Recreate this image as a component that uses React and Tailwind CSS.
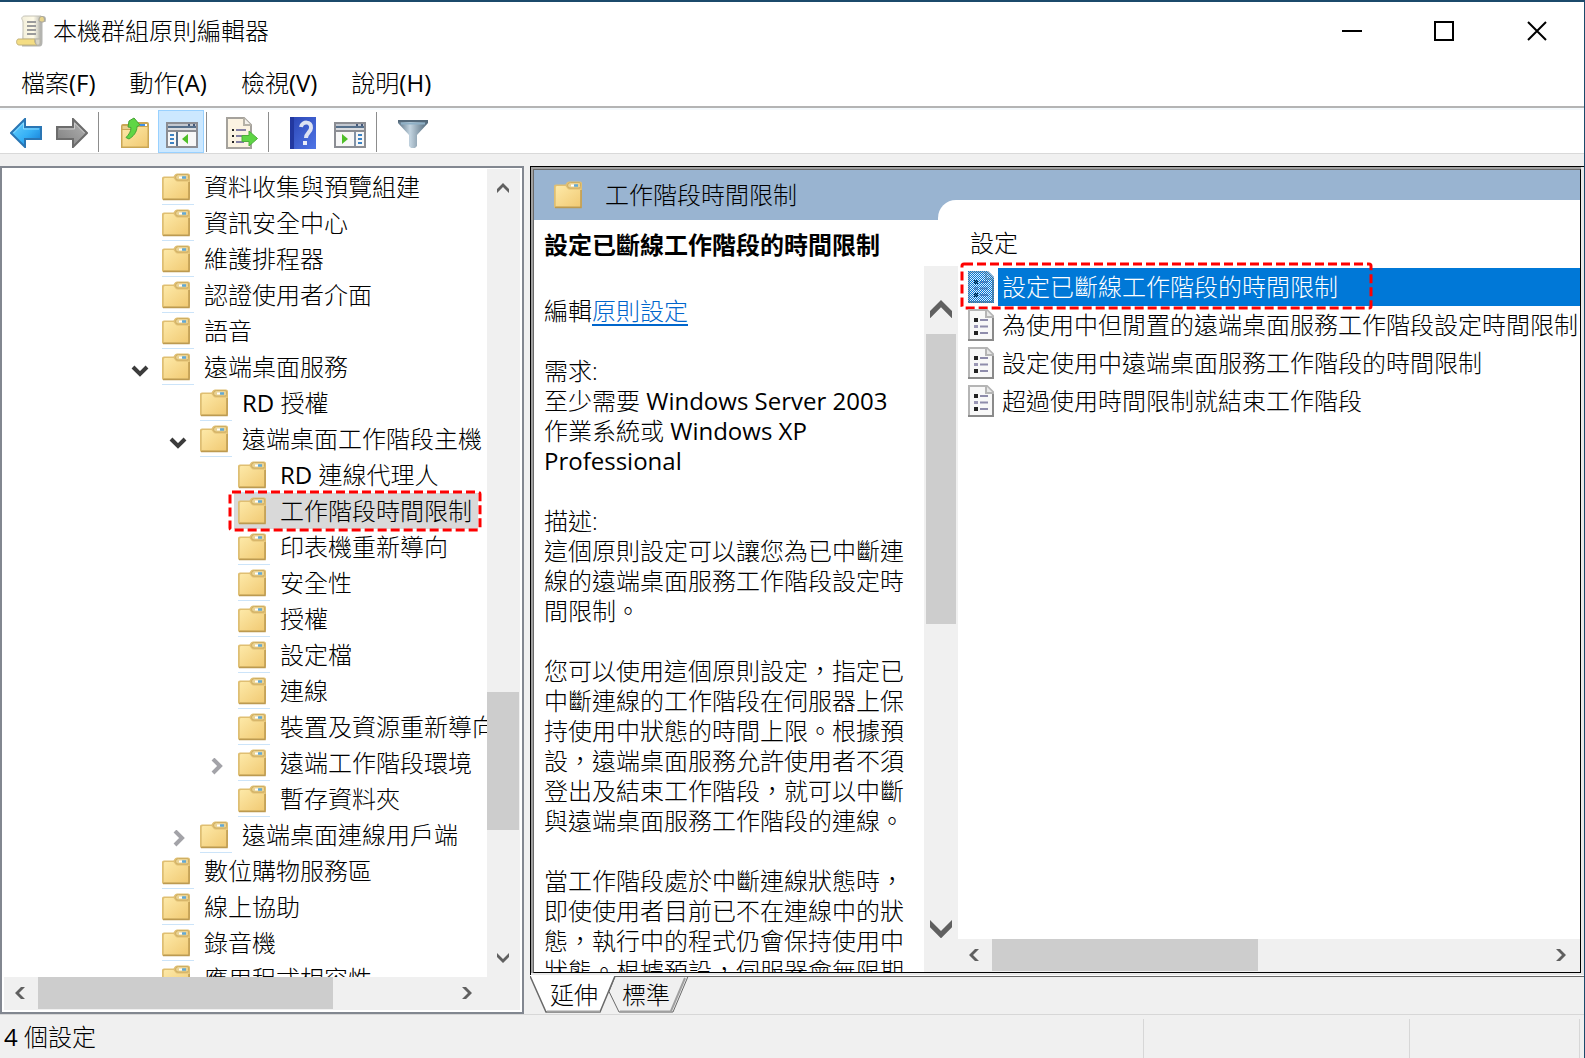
import { useState } from 'react';

const treeData = [
  { label: '資料收集與預覽組建', level: 0 },
  { label: '資訊安全中心', level: 0 },
  { label: '維護排程器', level: 0 },
  { label: '認證使用者介面', level: 0 },
  { label: '語音', level: 0 },
  { label: '遠端桌面服務', level: 0, state: 'open' },
  { label: '授權', prefix: 'RD', level: 1 },
  { label: '遠端桌面工作階段主機', level: 1, state: 'open' },
  { label: '連線代理人', prefix: 'RD', level: 2 },
  { label: '工作階段時間限制', level: 2 },
  { label: '印表機重新導向', level: 2 },
  { label: '安全性', level: 2 },
  { label: '授權', level: 2 },
  { label: '設定檔', level: 2 },
  { label: '連線', level: 2 },
  { label: '裝置及資源重新導向', level: 2 },
  { label: '遠端工作階段環境', level: 2, state: 'closed' },
  { label: '暫存資料夾', level: 2 },
  { label: '遠端桌面連線用戶端', level: 1, state: 'closed' },
  { label: '數位購物服務區', level: 0 },
  { label: '線上協助', level: 0 },
  { label: '錄音機', level: 0 },
  { label: '應用程式相容性', level: 0 },
];

const settings = [
  '設定已斷線工作階段的時間限制',
  '為使用中但閒置的遠端桌面服務工作階段設定時間限制',
  '設定使用中遠端桌面服務工作階段的時間限制',
  '超過使用時間限制就結束工作階段',
];

const menus = [
  { name: '檔案', hotkey: '(F)' },
  { name: '動作', hotkey: '(A)' },
  { name: '檢視', hotkey: '(V)' },
  { name: '說明', hotkey: '(H)' },
];

const indents = ['pl-[127px]', 'pl-[165px]', 'pl-[203px]'];

function Defs() {
  return (
    <svg className="absolute w-0 h-0" aria-hidden="true">
      <defs>
        <linearGradient id="folder" x1="0" y1="0" x2="1" y2="1">
          <stop offset="0" stopColor="#fde9a8" />
          <stop offset="1" stopColor="#f1ca74" />
        </linearGradient>
        <linearGradient id="blueArrow" x1="0" y1="0" x2="1" y2="1">
          <stop offset="0" stopColor="#6fd6ff" />
          <stop offset="0.55" stopColor="#36b0f5" />
          <stop offset="1" stopColor="#0f74cf" />
        </linearGradient>
        <linearGradient id="grayArrow" x1="0" y1="0" x2="1" y2="1">
          <stop offset="0" stopColor="#b4b4b4" />
          <stop offset="1" stopColor="#7e7e7e" />
        </linearGradient>
        <linearGradient id="help" x1="0" y1="0" x2="1" y2="1">
          <stop offset="0" stopColor="#2a45b4" />
          <stop offset="1" stopColor="#4f75e6" />
        </linearGradient>
        <linearGradient id="funnel" x1="0" y1="0" x2="1" y2="0">
          <stop offset="0" stopColor="#5b7386" />
          <stop offset="0.4" stopColor="#c3d4e0" />
          <stop offset="1" stopColor="#4d6577" />
        </linearGradient>
        <linearGradient id="scroll" x1="0" y1="0" x2="1" y2="0">
          <stop offset="0" stopColor="#f2eeda" />
          <stop offset="0.6" stopColor="#fffbe8" />
          <stop offset="1" stopColor="#b9b9b4" />
        </linearGradient>
        <pattern id="dither" width="2" height="2" patternUnits="userSpaceOnUse">
          <rect width="1" height="1" fill="#0078d7" />
          <rect x="1" y="1" width="1" height="1" fill="#0078d7" />
        </pattern>
      </defs>
    </svg>
  );
}

function FolderIcon() {
  return (
    <svg width="28" height="28" viewBox="0 0 28 28" className="shrink-0">
      <path d="M0 5q0-1.500 2-1.500h9.500l1-1.500q0.800-1.500 2.500-1.500h11q2 0 2 2V25q0 2-2 2H2q-2 0-2-1.500z" fill="#e0bf72" />
      <path d="M1.500 6.500Q1.500 5 3 5h8.500l2 2.500q0.500 1 2 1H27V25H1.500z" fill="url(#folder)" />
      <path d="M13.500 4q1-2.500 3-2.500h8.500q1.500 0 1.500 1.500v2.500q0 1.500-1.500 1.500h-9q-2.500 0-2.500-3z" fill="#ead394" stroke="#cfae62" />
      <path d="M17 4.500h4" stroke="#fff" strokeWidth="2" />
      <path d="M20 4.500h4" stroke="#64a9d2" strokeWidth="2.500" />
      <path d="M27 9v17.500H1" fill="none" stroke="#bd9a50" strokeWidth="1.500" />
      <path d="M1 25V6" stroke="#dcbd74" />
    </svg>
  );
}

function GpoIcon() {
  return (
    <svg width="31" height="32" viewBox="0 0 31 32">
      <path d="M8 1h19c3 0 3.500 3 2.500 6h-3v20c0 3-1 4.500-3 4.500H6z" fill="#b4b4b0" />
      <path d="M6 2.500C7 1 8 1 10 1h15c-2 1-2 3-2 6v17H7V7C7 5 5 4 6 2.500z" fill="url(#scroll)" stroke="#c4c2b6" />
      <path d="M23 6c0-3 1-5 3.500-4.500S29 7 27 7h-2z" fill="#e8d48c" stroke="#a8a59a" />
      <path d="M2 24h17c-1 2 0 5 2 6H3c-3 0-3-5-1-6z" fill="#f4dd83" stroke="#c2b27a" />
      <path d="M19 24h5v4c0 2-3 3-4 1z" fill="#d8d5c8" stroke="#b5b2a6" />
      <path d="M11 7h9M11 11h9M11 15h9M11 19h9" stroke="#9b9b9b" strokeWidth="2" />
    </svg>
  );
}

function SettingIcon({ selected }) {
  return (
    <svg width="26" height="32" viewBox="0 0 26 32" className="shrink-0">
      <path d="M1 1h18l6 6v24H1z" fill={selected ? '#e3eef8' : '#f8f8f8'} stroke="#b5b5b5" strokeWidth="2" />
      <path d="M25 9v22H0" fill="none" stroke="#8a8a8a" strokeWidth="2" />
      <path d="M18 1v7h7" fill="#e8e8e8" stroke="#b5b5b5" strokeWidth="2" />
      <path d="M6 9h4v4H6zM6 22h4v4H6z" fill="#222" />
      <path d="M6 16h4v3H6z" fill="#9a97b4" />
      <path d="M12 11h8M12 17.500h8M12 24h8" stroke="#8e8cab" strokeWidth="2" />
      {selected && <path d="M0 0h20l6 6v26H0z" fill="url(#dither)" />}
    </svg>
  );
}

function ArrowIcon({ forward }) {
  return (
    <svg width="32" height="30" viewBox="0 0 32 30" className={forward ? '-scale-x-100' : ''}>
      <path
        d="M1 15L15 1v8h16v12H15v8z"
        fill={forward ? 'url(#grayArrow)' : 'url(#blueArrow)'}
        stroke={forward ? '#6c6c6c' : '#2a76b4'}
        strokeWidth="2"
      />
      <path d="M3.500 15L13.500 5v6H29" fill="none" stroke={forward ? '#cacaca' : '#8fdcff'} />
    </svg>
  );
}

function UpFolderIcon() {
  return (
    <svg width="30" height="32" viewBox="0 0 30 32">
      <path d="M1 9q0-2 2-2h11l2-2h11q2 0 2 2v24H1z" fill="#c9a655" />
      <path d="M2.500 13H14l3-3h10.500v19.500h-25z" fill="url(#folder)" />
      <path d="M2.500 9H14v3H2.500z" fill="#e9cf8b" />
      <path d="M18 7h9v2h-9z" fill="#fff" />
      <path d="M20 7h5v2h-5z" fill="#3f8fe6" />
      <path d="M9 4l5-3 6 7-3 1.500c0 6-4 10-8 12.500l-3-1.500c3-3 5-6 5-10L8 10z" fill="#5fd644" stroke="#45a234" />
    </svg>
  );
}

function ConsoleIcon({ flipped }) {
  return (
    <svg width="32" height="26" viewBox="0 0 32 26">
      <rect x="1" y="1" width="30" height="24" fill="#f7f7f7" stroke="#8b8d93" strokeWidth="2" />
      <path d="M2 3h28" stroke="#c3c8d0" strokeWidth="2" />
      <path d="M22 3h2M27 3h2" stroke="#45597a" strokeWidth="2" />
      <path d="M2 5h28" stroke="#56708c" strokeWidth="2" />
      <path d="M2 7h28" stroke="#dadcdf" strokeWidth="2" />
      <path d="M2 9h28" stroke="#8b8d93" strokeWidth="2" />
      {flipped ? (
        <g>
          <path d="M21 10v14" stroke="#8292a6" strokeWidth="2" />
          <path d="M8 12l6 5-6 5z" fill="#4fbf2a" />
          <path d="M24 13h4M24 17h4M24 21h4" stroke="#3b82c4" strokeWidth="2" />
        </g>
      ) : (
        <g>
          <path d="M11 10v14" stroke="#56708c" strokeWidth="2" />
          <path d="M22 12l-6 5 6 5z" fill="#4fbf2a" />
          <path d="M4 13h4M4 17h4M4 21h4" stroke="#3b82c4" strokeWidth="2" />
        </g>
      )}
    </svg>
  );
}

function ExportIcon() {
  return (
    <svg width="32" height="32" viewBox="0 0 32 32">
      <path d="M1 1h17l7 7v23H1z" fill="#fbf3e2" stroke="#a5a29c" strokeWidth="2" />
      <path d="M18 1v7h7" fill="#f4f1ec" stroke="#b5b1a6" strokeWidth="2" />
      <path d="M6 13h2M6 19h2M6 25h2" stroke="#222" strokeWidth="2" />
      <path d="M10 13h10M10 19h6M10 25h8" stroke="#8481a4" strokeWidth="2" />
      <path d="M16 18.500h7V14l8.500 7.500L23 29v-4.500h-7z" fill="#5ed545" stroke="#4cae3a" />
    </svg>
  );
}

function HelpIcon() {
  return (
    <svg width="26" height="32" viewBox="0 0 26 32">
      <rect width="26" height="32" fill="url(#help)" />
      <path d="M2 0v32" stroke="#2238a0" strokeWidth="4" />
      <path d="M11 10c1-6 11-6 10 1 0 4-5 5-5 10" fill="none" stroke="#dde2f2" strokeWidth="4" />
      <rect x="13" y="24" width="4" height="4" fill="#e9edf8" />
    </svg>
  );
}

function FunnelIcon() {
  return (
    <svg width="30" height="28" viewBox="0 0 30 28">
      <path d="M0 0h30v3L19 15v11l-2 2h-4l-2-2V15L0 3z" fill="url(#funnel)" />
      <path d="M0 1h30" stroke="#54697a" strokeWidth="2" />
      <path d="M3 3.500h24" stroke="#8fb0c6" strokeWidth="2" />
    </svg>
  );
}

const arrowPoints = {
  up: '0,6 6,0 12,6 12,10 6,4 0,10',
  down: '0,0 6,6 12,0 12,4 6,10 0,4',
  left: '6,0 0,6 6,12 10,12 4,6 10,0',
  right: '4,0 10,6 4,12 0,12 6,6 0,0',
};

function ScrollArrow({ dir, label, className, size = 'w-3' }) {
  const vertical = dir === 'up' || dir === 'down';
  return (
    <button aria-label={label} className={`flex shrink-0 items-center justify-center ${className}`}>
      <svg viewBox={vertical ? '0 0 12 10' : '0 0 10 12'} className={size}>
        <polygon points={arrowPoints[dir]} fill="#606060" />
      </svg>
    </button>
  );
}

// Latin runs are a bit heavier than the Chinese text around them
function Latin({ children }) {
  return <span className="font-normal">{children}</span>;
}

// red dashed marker around a highlighted entry
function Marker({ className }) {
  return (
    <svg className={`absolute pointer-events-none overflow-visible ${className}`}>
      <rect width="100%" height="100%" rx="2" fill="none" stroke="#fe0000" strokeWidth="3" strokeDasharray="9 4" />
    </svg>
  );
}

function TreeRow({ item, selected, onSelect }) {
  return (
    <li className={`flex h-9 items-center ${indents[item.level]}`}>
      <span className="flex w-[27px] shrink-0 pt-2">
        {item.state === 'open' && (
          <svg width="18" height="12" viewBox="0 0 18 12">
            <path d="M2 2l7 7 7-7" fill="none" stroke="#3c3c3c" strokeWidth="4" />
          </svg>
        )}
        {item.state === 'closed' && (
          <svg width="18" height="18" viewBox="0 0 18 18">
            <path d="M6 1l7 7-7 7" fill="none" stroke="#a3a3a8" strokeWidth="4" />
          </svg>
        )}
      </span>
      <button
        onClick={onSelect}
        className={`relative flex h-9 shrink-0 items-center whitespace-nowrap pl-1 ${selected ? 'bg-[#d9d9d9] pr-1.5' : ''}`}
      >
        <span className={`flex h-full w-8 items-center ${selected ? '' : 'border-b border-[#cce4f9]'}`}>
          <FolderIcon />
        </span>
        <span className="pl-2.5">
          {item.prefix && <Latin>{item.prefix} </Latin>}
          {item.label}
        </span>
        {selected && <Marker className="-left-1 -top-px h-[38px] w-[calc(100%+6px)]" />}
      </button>
    </li>
  );
}

function ToolDivider() {
  return <span className="h-10 w-px shrink-0 bg-[#8d8d8d]" />;
}

function App() {
  const [selectedNode, setSelectedNode] = useState(9);
  const [selectedSetting, setSelectedSetting] = useState(0);

  return (
    <div className="flex h-screen flex-col overflow-hidden border-t-2 border-r border-[#1b4a6b] bg-[#f0f0f0] font-['Open_Sans','Noto_Sans_CJK_TC',sans-serif] text-[24px] leading-[30px] font-light text-black">
      <Defs />

      {/* Title bar */}
      <header className="flex h-[58px] shrink-0 items-center bg-white pl-4">
        <GpoIcon />
        <h1 className="flex-1 pl-1.5">本機群組原則編輯器</h1>
        <div className="flex">
          <button aria-label="最小化" className="flex h-[58px] w-[92px] items-center justify-center">
            <svg width="20" height="20" viewBox="0 0 20 20"><path d="M0 10h20" stroke="#000" strokeWidth="2" /></svg>
          </button>
          <button aria-label="最大化" className="flex h-[58px] w-[92px] items-center justify-center">
            <svg width="20" height="20" viewBox="0 0 20 20"><rect x="1" y="1" width="18" height="18" fill="none" stroke="#000" strokeWidth="2" /></svg>
          </button>
          <button aria-label="關閉" className="flex h-[58px] w-[94px] items-center justify-center">
            <svg width="20" height="20" viewBox="0 0 20 20"><path d="M1 1l18 18M19 1L1 19" stroke="#000" strokeWidth="2" /></svg>
          </button>
        </div>
      </header>

      {/* Menu bar */}
      <nav className="flex h-12 shrink-0 items-center gap-[34px] border-b-2 border-[#b4b4b4] bg-white pl-[21px]">
        {menus.map((menu) => (
          <button key={menu.name}>{menu.name}<Latin>{menu.hotkey}</Latin></button>
        ))}
      </nav>

      {/* Toolbar */}
      <div className="flex h-[46px] shrink-0 items-center border-t-2 border-b border-t-[#f5fafd] border-b-[#d9d9d9] bg-white">
        <button aria-label="上一頁" className="ml-2.5 pt-0.5"><ArrowIcon /></button>
        <button aria-label="下一頁" className="mr-2.5 ml-3.5 pt-0.5"><ArrowIcon forward /></button>
        <ToolDivider />
        <button aria-label="上移一層" className="mr-2 ml-[21px] pt-0.5"><UpFolderIcon /></button>
        <button aria-label="顯示主控台樹狀目錄" className="flex h-[43px] w-[46px] items-center justify-center border border-[#99d1ff] bg-[#cce8ff] pt-1.5 pl-0.5"><ConsoleIcon /></button>
        <span className="w-0.5" />
        <ToolDivider />
        <button aria-label="匯出清單" className="mr-2.5 ml-[19px] pt-0.5"><ExportIcon /></button>
        <ToolDivider />
        <button aria-label="說明" className="ml-[21px] pt-0.5"><HelpIcon /></button>
        <button aria-label="顯示動作窗格" className="mr-2.5 ml-[18px] pt-1.5"><ConsoleIcon flipped /></button>
        <ToolDivider />
        <button aria-label="篩選" className="ml-[21px] pt-1"><FunnelIcon /></button>
      </div>

      <main className="flex min-h-0 flex-1 pt-3">
        {/* Console tree */}
        <section className="flex w-[524px] shrink-0 flex-col border-2 border-[#828790] bg-white p-0.5 pt-px">
          <div className="flex min-h-0 flex-1">
            <ul className="min-w-0 flex-1 overflow-hidden">
              {treeData.map((item, index) => (
                <TreeRow
                  key={index}
                  item={item}
                  selected={index === selectedNode}
                  onSelect={() => setSelectedNode(index)}
                />
              ))}
            </ul>
            <div className="flex w-[33px] shrink-0 flex-col bg-[#f0f0f0]">
              <ScrollArrow dir="up" label="向上捲動" className="h-[38px] pr-0.5" />
              <div className="flex flex-1 flex-col">
                <div className="grow-[485]" />
                <div className="mr-px grow-[138] bg-[#cdcdcd]" />
                <div className="grow-[109]" />
              </div>
              <ScrollArrow dir="down" label="向下捲動" className="h-[38px] pr-0.5" />
            </div>
          </div>
          <div className="flex h-[33px] shrink-0 bg-[#f0f0f0]">
            <ScrollArrow dir="left" label="向左捲動" className="w-[34px] pr-0.5 pb-0.5" size="w-2.5" />
            <div className="flex flex-1">
              <div className="mb-px grow-[294] bg-[#cdcdcd]" />
              <div className="grow-[119]" />
            </div>
            <ScrollArrow dir="right" label="向右捲動" className="w-[34px] pr-1 pb-0.5" size="w-2.5" />
            <div className="w-[34px]" />
          </div>
        </section>

        {/* Result pane */}
        <section className="ml-1.5 flex min-w-0 flex-1 flex-col">
          <div className="flex min-h-0 flex-1 flex-col border-t border-l border-black bg-[#e8e8e8] pr-[3px] pb-0.5">
            <div className="flex min-h-0 flex-1 flex-col border-t-2 border-l-2 border-[#a0a0a0]">
              <div className="flex min-h-0 flex-1 flex-col border border-t-[#696969] border-r-black border-b-black border-l-[#696969] bg-white">
                <div className="flex h-[50px] shrink-0 bg-[#99b4d1]">
                  <div className="flex w-[404px] shrink-0 items-center gap-[23px] pl-5">
                    <FolderIcon />
                    <h2>工作階段時間限制</h2>
                  </div>
                  <div className="mt-[30px] flex-1 rounded-tl-[18px] bg-white" />
                </div>

                <div className="flex min-h-0 flex-1">
                  {/* Description */}
                  <div className="flex w-[424px] shrink-0 flex-col">
                    <h3 className="h-[46px] shrink-0 pt-2.5 pl-2.5 font-bold">{settings[selectedSetting]}</h3>
                    <div className="flex min-h-0 flex-1">
                      <div className="w-[390px] overflow-hidden pt-[30px] pr-4 pl-2.5">
                        <p>編輯<a href="#edit" className="text-[#0066cc] underline decoration-2 underline-offset-4">原則設定</a></p>
                        <p className="pt-[30px]">需求:</p>
                        <p>至少需要 <Latin>Windows Server 2003</Latin> 作業系統或 <Latin>Windows XP Professional</Latin></p>
                        <p className="pt-[30px]">描述:</p>
                        <p>這個原則設定可以讓您為已中斷連線的遠端桌面服務工作階段設定時間限制。</p>
                        <p className="pt-[30px]">您可以使用這個原則設定，指定已中斷連線的工作階段在伺服器上保持使用中狀態的時間上限。根據預設，遠端桌面服務允許使用者不須登出及結束工作階段，就可以中斷與遠端桌面服務工作階段的連線。</p>
                        <p className="pt-[30px]">當工作階段處於中斷連線狀態時，即使使用者目前已不在連線中的狀態，執行中的程式仍會保持使用中狀態。根據預設，伺服器會無限期</p>
                      </div>
                      <div className="flex w-[34px] shrink-0 flex-col bg-[#f0f0f0]">
                        <ScrollArrow dir="up" label="向上捲動" className="h-[68px] pt-[18px]" size="w-[22px]" />
                        <div className="flex flex-1 flex-col">
                          <div className="mx-0.5 grow-[290] bg-[#cdcdcd]" />
                          <div className="grow-[280]" />
                        </div>
                        <ScrollArrow dir="down" label="向下捲動" className="h-[68px] pb-[18px]" size="w-[22px]" />
                      </div>
                    </div>
                  </div>

                  {/* Settings list */}
                  <div className="flex min-w-0 flex-1 flex-col">
                    <div className="h-12 shrink-0 pt-2 pl-3">設定</div>
                    <ul className="min-h-0 flex-1">
                      {settings.map((name, index) => (
                        <li key={name}>
                          <button
                            onClick={() => setSelectedSetting(index)}
                            className="relative flex h-[38px] w-full items-center pl-2.5 text-left whitespace-nowrap"
                          >
                            <SettingIcon selected={index === selectedSetting} />
                            <span className={`ml-1 flex h-full min-w-0 flex-1 items-center pl-1 ${index === selectedSetting ? 'bg-[#0078d7] text-white' : ''}`}>
                              {name}
                            </span>
                            {index === selectedSetting && <Marker className="-top-1 left-1 h-11 w-[409px]" />}
                          </button>
                        </li>
                      ))}
                    </ul>
                    <div className="flex h-[33px] shrink-0 bg-[#f0f0f0]">
                      <ScrollArrow dir="left" label="向左捲動" className="w-[34px] pr-0.5 pb-0.5" size="w-2.5" />
                      <div className="flex flex-1">
                        <div className="mb-px grow-[266] bg-[#cdcdcd]" />
                        <div className="grow-[288]" />
                      </div>
                      <ScrollArrow dir="right" label="向右捲動" className="w-[34px] pr-1 pb-0.5" size="w-2.5" />
                    </div>
                  </div>
                </div>
              </div>
            </div>
          </div>

          {/* Bottom tabs */}
          <div className="h-px shrink-0 bg-white" />
          <div className="relative flex h-[38px] shrink-0 border-t border-[#696969]">
            <svg width="160" height="38" viewBox="0 0 160 38" className="absolute -top-px left-0">
              <path d="M85 0.500l-6 15L89 36h54L158 0.500z" fill="#f0f0f0" stroke="#696969" />
              <path d="M155 2l-14 33M90 35.500h52" stroke="#a0a0a0" strokeWidth="2" />
              <path d="M0 0L16 36h54L85 0z" fill="#fff" />
              <path d="M0 0l16 36h54L85 0" fill="none" stroke="#696969" strokeWidth="1.500" />
              <path d="M17 35.500h53" stroke="#a0a0a0" strokeWidth="2" />
            </svg>
            <button className="relative ml-5 h-9">延伸</button>
            <button className="relative ml-6 h-9">標準</button>
          </div>
        </section>
      </main>

      {/* Status bar */}
      <footer className="flex h-11 shrink-0 items-center border-t border-[#d7d7d7] pl-1">
        <span className="flex-1"><Latin>4</Latin> 個設定</span>
        <span className="mt-1 h-10 w-[266px] border-l border-[#d7d7d7]" />
        <span className="mt-1 h-10 w-[170px] border-l border-[#d7d7d7]" />
        <span className="mt-1 h-10 w-[5px] border-l border-[#d7d7d7]" />
      </footer>
    </div>
  );
}

export default App;
